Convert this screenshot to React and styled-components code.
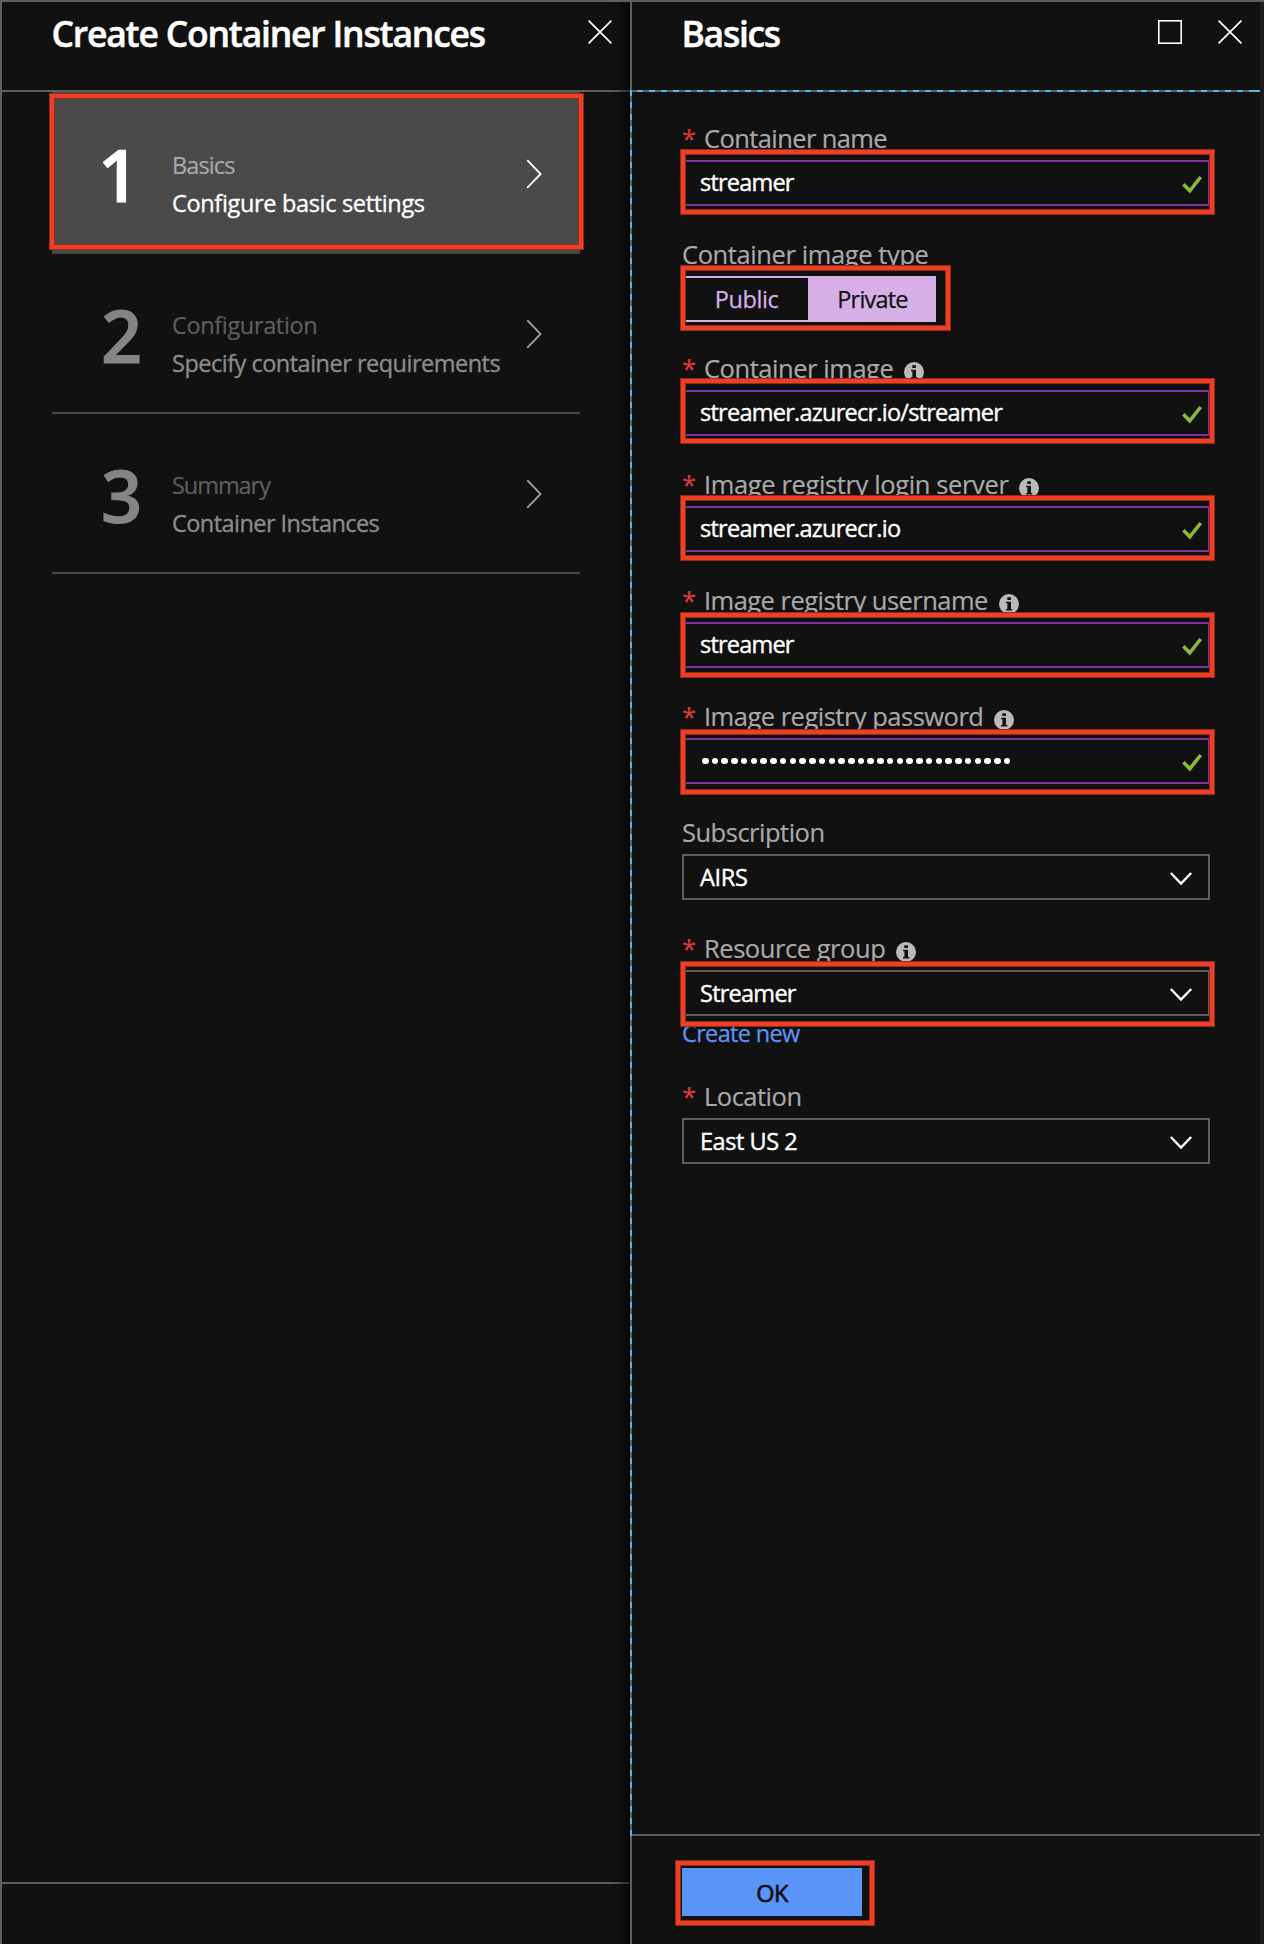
import React from "react";
import styled, { createGlobalStyle } from "styled-components";

const GlobalStyle = createGlobalStyle`
  * { box-sizing: border-box; }
  html, body { margin: 0; background: #111; }
  body { font-family: "Open Sans", "Noto Sans", sans-serif; -webkit-font-smoothing: antialiased; }
`;

const Page = styled.div`
  display: flex;
  width: 1264px;
  height: 1944px;
  overflow: hidden;
  border-top: 2px solid #5f5f5f;
  background: #111;
`;

const Blade = styled.section`
  display: flex;
  flex-direction: column;
  flex: none;
  width: ${(p) => p.$width}px;
  border-left: 2px solid #5f5f5f;
  position: relative;
`;

const Shade = styled.div`
  position: absolute;
  top: 0;
  right: 0;
  bottom: 0;
  width: 26px;
  background: linear-gradient(to right, rgba(0, 0, 0, 0), rgba(0, 0, 0, 0.15) 50%, rgba(0, 0, 0, 0.55));
`;

const Edge = styled.div`
  flex: 1;
  background: #1d1d1d;
`;

const Header = styled.header`
  display: flex;
  align-items: flex-start;
  justify-content: space-between;
  height: 90px;
  flex: none;
  padding: 18px 18px 0 ${(p) => p.$left}px;
  border-bottom: 2px solid #5f5f5f;
`;

const Title = styled.h1`
  margin: -11px 0 0;
  font-size: 35.5px;
  line-height: 48px;
  font-weight: 600;
  letter-spacing: ${(p) => p.$track}px;
  color: #fff;
  white-space: nowrap;
  -webkit-text-stroke: 0.5px #fff;
`;

const Actions = styled.div`
  display: flex;
  gap: 36px;
  svg { display: block; }
`;

const Steps = styled.div`
  display: flex;
  flex-direction: column;
  flex: 1;
  padding: 0 50px;
`;

const Step = styled.div`
  position: relative;
  display: flex;
  height: ${(p) => (p.$active ? 162 : 160)}px;
  padding-top: ${(p) => (p.$active ? 2 : 0)}px;
  background: ${(p) => (p.$active ? "#4a4a4a" : "transparent")};
  border-bottom: 2px solid #444;
`;

const StepNumber = styled.div`
  width: 120px;
  padding: ${(p) => (p.$active ? 31 : 32)}px 0 0 ${(p) => (p.$active ? 46 : 49)}px;
  font-size: 72px;
  line-height: 98px;
  font-weight: 600;
  color: ${(p) => (p.$active ? "#fff" : "#858585")};
  -webkit-text-stroke: 1px ${(p) => (p.$active ? "#fff" : "#858585")};
`;

const StepText = styled.div`
  flex: 1;
  padding-top: 52px;
`;

const StepName = styled.div`
  font-size: 23.5px;
  line-height: 38px;
  letter-spacing: ${(p) => p.$track}px;
  color: ${(p) => (p.$active ? "#a9a9a9" : "#5f5f5f")};
  -webkit-text-stroke: 0.2px currentColor;
`;

const StepHint = styled.div`
  font-size: 23.5px;
  line-height: 38px;
  letter-spacing: ${(p) => p.$track}px;
  white-space: nowrap;
  color: ${(p) => (p.$active ? "#fff" : "#8c8c8c")};
  -webkit-text-stroke: 0.35px currentColor;
`;

const StepArrow = styled.svg`
  margin: 65px 38px 0 0;
  flex: none;
`;

const Highlight = styled.div`
  position: absolute;
  top: ${(p) => p.$top}px;
  left: ${(p) => p.$left}px;
  width: ${(p) => p.$width}px;
  height: ${(p) => p.$height}px;
  border: 4px solid #ef3f25;
  outline: 1px solid #8f2c1c;
  box-shadow: inset 0 0 0 1px #8f2c1c;
  pointer-events: none;
`;

const BladeFooter = styled.footer`
  flex: none;
  height: ${(p) => p.$height}px;
  border-top: 2px solid #5f5f5f;
  padding: 32px 0 0 50px;
`;

const FocusTop = styled.div`
  position: absolute;
  left: -2px;
  right: 0;
  top: 88px;
  height: 2px;
  background: repeating-linear-gradient(to right, #56b9ee 0 6px, #5f5f5f 6px 12px);
  background-position: -5px 0;
`;

const FocusLeft = styled.div`
  position: absolute;
  left: -2px;
  top: 88px;
  width: 2px;
  height: 1746px;
  background: repeating-linear-gradient(to bottom, #56b9ee 0 6px, #5f5f5f 6px 12px);
`;

const Form = styled.div`
  flex: 1;
  display: flex;
  flex-direction: column;
  padding: 28px 50px 0;
`;

const Field = styled.div`
  position: relative;
  height: ${(p) => p.$height}px;
  flex: none;
`;

const Label = styled.label`
  display: flex;
  align-items: center;
  height: 40px;
  padding-bottom: 4px;
  font-size: 25.5px;
  letter-spacing: ${(p) => p.$track}px;
  color: #a9a9a9;
  white-space: nowrap;
  -webkit-text-stroke: 0.2px currentColor;
`;

const Star = styled.span`
  width: 22px;
  color: #e23a34;
  letter-spacing: 0;
`;

const InfoIcon = styled.svg`
  margin: 8px 0 0 11px;
`;

const Box = styled.div`
  display: flex;
  align-items: center;
  justify-content: space-between;
  height: 46px;
  padding: 0 ${(p) => (p.$valid ? 6 : 16)}px ${(p) => (p.$valid ? 3 : 1)}px 16px;
  border: 2px solid ${(p) => (p.$valid ? "#7f33a0" : "#5f5f5f")};
  color: #fff;
  font-size: 23.5px;
  letter-spacing: ${(p) => p.$track}px;
  -webkit-text-stroke: 0.4px currentColor;
  svg { position: relative; top: ${(p) => (p.$valid ? 3 : 2)}px; overflow: visible; }
`;

const Dots = styled.span`
  display: flex;
  gap: 3.24px;
  padding: 3px 0 0 2px;
`;

const Dot = styled.i`
  width: 6.5px;
  height: 6.5px;
  border-radius: 50%;
  background: #fff;
`;

const Toggle = styled.div`
  display: flex;
  width: 254px;
  height: 46px;
  border: 2px solid #d5afe6;
`;

const Option = styled.button`
  flex: ${(p) => (p.$on ? 1 : "none")};
  width: ${(p) => (p.$on ? "auto" : "124px")};
  border: 0;
  padding: 0 0 0 ${(p) => (p.$on ? 3 : 1)}px;
  font: 23.5px "Open Sans", sans-serif;
  letter-spacing: ${(p) => (p.$on ? -0.8 : -0.4)}px;
  color: ${(p) => (p.$on ? "#111" : "#d5afe6")};
  background: ${(p) => (p.$on ? "#d5afe6" : "#111")};
  -webkit-text-stroke: 0.25px currentColor;
`;

const Link = styled.a`
  display: block;
  font-size: 23.5px;
  line-height: 34px;
  letter-spacing: ${(p) => p.$track}px;
  color: #5b94f9;
  -webkit-text-stroke: 0.25px currentColor;
`;

const OkButton = styled.button`
  display: block;
  width: 180px;
  height: 48px;
  border: 0;
  padding: 1px 0 0;
  background: #5b94f9;
  color: #111;
  font: 23.5px "Open Sans", sans-serif;
  letter-spacing: -0.5px;
  -webkit-text-stroke: 0.7px currentColor;
`;

const CloseIcon = () => (
  <svg width="24" height="24" viewBox="0 0 24 24" stroke="#fff" strokeWidth="1.7">
    <path d="M0.6 0.6 23.4 23.4M23.4 0.6 0.6 23.4" />
  </svg>
);

const MaximizeIcon = () => (
  <svg width="24" height="24" viewBox="0 0 24 24" fill="none" stroke="#fff" strokeWidth="1.6">
    <rect x="0.8" y="0.8" width="22.4" height="22.4" />
  </svg>
);

const Check = () => (
  <svg width="20" height="18" viewBox="0 0 20 18" fill="none" stroke="#8cb83a" strokeWidth="3.6">
    <path d="M1.4 8.2 7.8 14.8 18.7 1" />
  </svg>
);

const Chevron = () => (
  <svg width="22" height="14" viewBox="0 0 22 14" fill="none" stroke="#fff" strokeWidth="2.4">
    <path d="M0.8 1 11 11.6 21.2 1" />
  </svg>
);

const Info = () => (
  <InfoIcon width="20" height="20" viewBox="0 0 20 20">
    <circle cx="10" cy="10" r="10" fill="#bababa" />
    <path d="M8.3 3.2h3.6v2.9H8.3zM7 7.8h5v7.2h1.3v1.4H7V15h1.4V9.2H7z" fill="#111" />
  </InfoIcon>
);

const steps = [
  { n: 1, name: "Basics", hint: "Configure basic settings", active: true, t: [-0.9, -0.33] },
  { n: 2, name: "Configuration", hint: "Specify container requirements", t: [-0.35, -0.5] },
  { n: 3, name: "Summary", hint: "Container Instances", t: [-1.05, -0.55] },
];

const fields = [
  { label: "Container name", required: true, value: "streamer", valid: true, mark: 33, h: 116, track: -0.6, valueTrack: -0.8 },
  { label: "Container image type", toggle: true, mark: 33, markWidth: 269, h: 114, track: -0.4 },
  { label: "Container image", required: true, info: true, value: "streamer.azurecr.io/streamer", valid: true, mark: 32, h: 116, track: -0.45, valueTrack: -0.75 },
  { label: "Image registry login server", required: true, info: true, value: "streamer.azurecr.io", valid: true, mark: 33, h: 116, track: -0.37, valueTrack: -0.75 },
  { label: "Image registry username", required: true, info: true, value: "streamer", valid: true, mark: 34, h: 116, track: -0.53, valueTrack: -0.8 },
  { label: "Image registry password", required: true, info: true, dots: 32, valid: true, mark: 35, h: 116, track: -0.5 },
  { label: "Subscription", value: "AIRS", h: 116, track: -0.5 },
  { label: "Resource group", required: true, info: true, value: "Streamer", mark: 35, link: "Create new", h: 148, track: -0.45, valueTrack: -0.75 },
  { label: "Location", required: true, value: "East US 2", h: 116, track: -0.5, valueTrack: -0.45 },
];

const FormField = ({ f }) => (
  <Field $height={f.h}>
    <Label $track={f.track}>
      {f.required && <Star>*</Star>}
      {f.label}
      {f.info && <Info />}
    </Label>
    {f.toggle ? (
      <Toggle>
        <Option>Public</Option>
        <Option $on>Private</Option>
      </Toggle>
    ) : (
      <Box $valid={f.valid} $track={f.valueTrack ?? -0.3}>
        {f.dots ? (
          <Dots>{Array.from({ length: f.dots }, (_, i) => <Dot key={i} />)}</Dots>
        ) : (
          <span>{f.value}</span>
        )}
        {f.valid ? <Check /> : <Chevron />}
      </Box>
    )}
    {f.link && <Link $track={-0.65}>{f.link}</Link>}
    {f.mark && <Highlight $top={f.mark - 3} $left={-1} $width={f.markWidth ?? 533} $height={64} />}
  </Field>
);

const OkSlot = styled.div`
  position: relative;
  width: 180px;
`;

export default function App() {
  return (
    <>
      <GlobalStyle />
      <Page>
        <Blade $width={630}>
          <Header $left={49.5}>
            <Title $track={-1.2}>Create Container Instances</Title>
            <Actions><CloseIcon /></Actions>
          </Header>
          <Steps>
            {steps.map((s) => (
              <Step key={s.n} $active={s.active}>
                <StepNumber $active={s.active}>{s.n}</StepNumber>
                <StepText>
                  <StepName $active={s.active} $track={s.t[0]}>{s.name}</StepName>
                  <StepHint $active={s.active} $track={s.t[1]}>{s.hint}</StepHint>
                </StepText>
                <StepArrow width="16" height="30" viewBox="0 0 16 30" fill="none" stroke={s.active ? "#fff" : "#a0a0a0"} strokeWidth="1.8">
                  <path d="M1.2 1.2 14.6 15 1.2 28.8" />
                </StepArrow>
                {s.active && <Highlight $top={2} $left={-2} $width={533} $height={155} />}
              </Step>
            ))}
          </Steps>
          <BladeFooter $height={62} />
          <Shade />
        </Blade>
        <Blade $width={630}>
          <Header $left={49.5}>
            <Title $track={-1.3}>Basics</Title>
            <Actions><MaximizeIcon /><CloseIcon /></Actions>
          </Header>
          <FocusTop />
          <FocusLeft />
          <Form>
            {fields.map((f) => <FormField key={f.label} f={f} />)}
          </Form>
          <BladeFooter $height={110}>
            <OkSlot>
              <OkButton>OK</OkButton>
              <Highlight $top={-7} $left={-6} $width={198} $height={64} />
            </OkSlot>
          </BladeFooter>
        </Blade>
        <Edge />
      </Page>
    </>
  );
}
